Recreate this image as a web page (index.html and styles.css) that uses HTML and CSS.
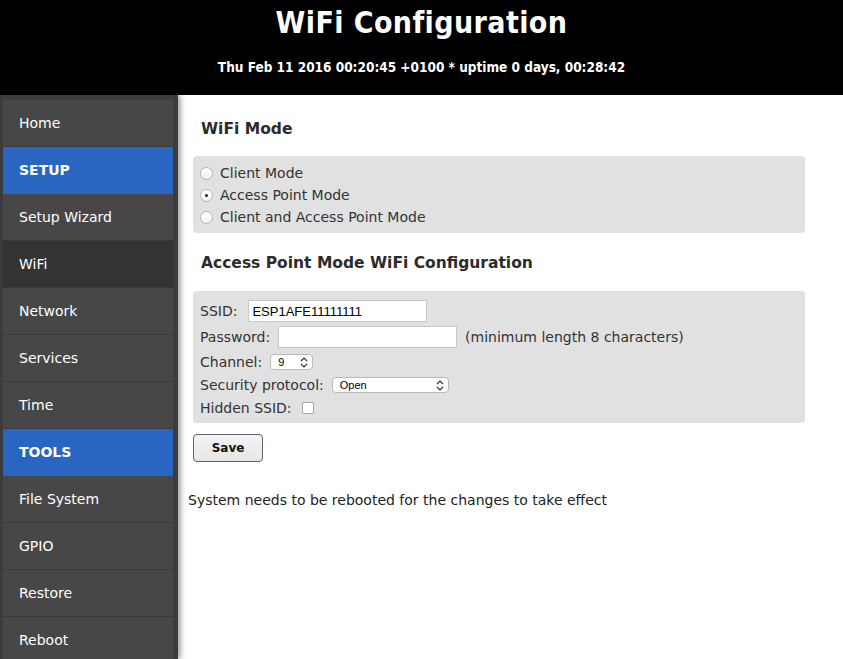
FILE: index.html
```html
<!DOCTYPE html>
<html>
<head>
<meta charset="utf-8">
<title>WiFi Configuration</title>
<link rel="stylesheet" href="styles.css">
</head>
<body>
<header class="top">
  <h1 class="title">WiFi Configuration</h1>
  <div class="subtitle">Thu Feb 11 2016 00:20:45 +0100 * uptime 0 days, 00:28:42</div>
</header>
<div class="layout">
  <nav class="sidebar">
    <a class="nav-item">Home</a>
    <a class="nav-item section">SETUP</a>
    <a class="nav-item">Setup Wizard</a>
    <a class="nav-item current">WiFi</a>
    <a class="nav-item">Network</a>
    <a class="nav-item">Services</a>
    <a class="nav-item">Time</a>
    <a class="nav-item section">TOOLS</a>
    <a class="nav-item">File System</a>
    <a class="nav-item">GPIO</a>
    <a class="nav-item">Restore</a>
    <a class="nav-item">Reboot</a>
  </nav>
  <main class="content">
    <h2 class="heading">WiFi Mode</h2>
    <div class="box box-mode">
      <label class="radio-row"><input type="radio" name="mode" class="radio"><span>Client Mode</span></label>
      <label class="radio-row"><input type="radio" name="mode" class="radio" checked><span>Access Point Mode</span></label>
      <label class="radio-row"><input type="radio" name="mode" class="radio"><span>Client and Access Point Mode</span></label>
    </div>
    <h2 class="heading heading-second">Access Point Mode WiFi Configuration</h2>
    <div class="box box-config">
      <div class="row row-tall">
        <span class="label label-ssid">SSID:</span>
        <input type="text" class="text-input" value="ESP1AFE11111111">
      </div>
      <div class="row row-tall">
        <span class="label">Password:</span>
        <input type="password" class="text-input">
        <span class="hint">(minimum length 8 characters)</span>
      </div>
      <div class="row">
        <span class="label">Channel:</span>
        <span class="select-wrap select-channel">
          <select class="select"><option>9</option></select>
          <svg class="chev" width="8" height="11" viewBox="0 0 8 11"><path d="M1 4 L4 1 L7 4 M1 7 L4 10 L7 7" fill="none" stroke="#333" stroke-width="1.2"/></svg>
        </span>
      </div>
      <div class="row">
        <span class="label">Security protocol:</span>
        <span class="select-wrap select-security">
          <select class="select"><option>Open</option></select>
          <svg class="chev" width="8" height="11" viewBox="0 0 8 11"><path d="M1 4 L4 1 L7 4 M1 7 L4 10 L7 7" fill="none" stroke="#333" stroke-width="1.2"/></svg>
        </span>
      </div>
      <div class="row">
        <span class="label label-hidden">Hidden SSID:</span>
        <input type="checkbox" class="checkbox">
      </div>
    </div>
    <button class="save">Save</button>
    <p class="note">System needs to be rebooted for the changes to take effect</p>
  </main>
</div>
</body>
</html>
```
FILE: styles.css
```css
html, body {
  margin: 0;
  padding: 0;
  background: #fff;
}
body {
  font-family: "DejaVu Sans", Verdana, sans-serif;
  color: #333;
  font-size: 13px;
  height: 659px;
  overflow: hidden;
}
.top {
  background: #000;
  color: #fff;
  height: 95px;
  text-align: center;
  box-sizing: border-box;
  padding-top: 5px;
}
.title {
  margin: 0;
  font-family: "DejaVu Sans Condensed", "DejaVu Sans", sans-serif;
  font-stretch: condensed;
  font-weight: bold;
  font-size: 30px;
  line-height: 36px;
  letter-spacing: 0.4px;
}
.subtitle {
  margin-top: 17px;
  font-family: "DejaVu Sans Condensed", "DejaVu Sans", sans-serif;
  font-stretch: condensed;
  font-weight: bold;
  font-size: 13.5px;
  line-height: 18px;
}
.layout {
  display: flex;
  height: 564px;
}
.sidebar {
  width: 170px;
  flex: none;
  background: #3c3c3c;
  padding: 5px 5px 0 3px;
  display: flex;
  flex-direction: column;
  box-shadow: 2px 0 6px rgba(0, 0, 0, 0.45);
  position: relative;
  z-index: 1;
}
.nav-item {
  display: flex;
  align-items: center;
  height: 46px;
  flex: none;
  border-bottom: 1px solid #3a3a3a;
  background: #474747;
  color: #fff;
  padding-left: 16px;
  font-size: 14px;
  text-decoration: none;
}
.nav-item.section {
  background: #2966c1;
  font-weight: bold;
  border-bottom-color: #2966c1;
}
.nav-item.current {
  background: #333333;
}
.content {
  flex: 1;
  padding: 4px 38px 0 10px;
}
.heading {
  margin: 21px 0 18px 13px;
  font-size: 15.5px;
  line-height: 18px;
  font-weight: bold;
  color: #2b2b2b;
}
.heading-second {
  margin-bottom: 19px;
}
.box {
  margin-left: 5px;
  background: #e1e1e1;
  border-radius: 4px;
  box-sizing: border-box;
}
.box-mode {
  padding: 6px 7px 5px 7px;
}
.radio-row {
  display: flex;
  align-items: center;
  height: 22px;
  font-size: 14px;
  color: #333;
}
.radio {
  appearance: none;
  -webkit-appearance: none;
  width: 13px;
  height: 13px;
  margin: 0 7px 0 0;
  border-radius: 50%;
  border: 1px solid #b5b5b5;
  background: linear-gradient(#fff, #f1f1f1);
  box-sizing: border-box;
  position: relative;
}
.radio:checked::after {
  content: "";
  position: absolute;
  left: 4px;
  top: 4px;
  width: 3px;
  height: 3px;
  border-radius: 50%;
  background: #222;
}
.box-config {
  padding: 7px 7px 4px 7px;
}
.row {
  display: flex;
  align-items: center;
  height: 23px;
  font-size: 14px;
  color: #333;
}
.row-tall {
  height: 26px;
}
.label {
  margin-right: 8px;
}
.label-ssid {
  margin-right: 11px;
}
.label-hidden {
  margin-right: 10px;
}
.text-input {
  width: 179px;
  height: 22px;
  box-sizing: border-box;
  border: 1px solid #c8c8c8;
  background: #fff;
  padding: 0 3px;
  font-family: "Liberation Sans", Arial, sans-serif;
  font-size: 13px;
  color: #000;
  outline: none;
}
.hint {
  margin-left: 8px;
}
.select-wrap {
  position: relative;
  display: inline-block;
  height: 16px;
}
.select {
  appearance: none;
  -webkit-appearance: none;
  height: 16px;
  box-sizing: border-box;
  border: 1px solid #b9b9b9;
  border-radius: 4px;
  background: #fff;
  font-family: "Liberation Sans", Arial, sans-serif;
  font-size: 11px;
  color: #000;
  padding: 0 0 0 7px;
  margin: 0;
  outline: none;
  display: block;
}
.select-channel .select {
  width: 43px;
}
.select-security .select {
  width: 117px;
}
.chev {
  position: absolute;
  right: 5px;
  top: 3px;
  pointer-events: none;
}
.checkbox {
  appearance: none;
  -webkit-appearance: none;
  width: 12px;
  height: 12px;
  margin: 0;
  border: 1px solid #a9a9a9;
  border-radius: 2px;
  background: #fff;
  box-sizing: border-box;
}
.save {
  margin: 11px 0 0 5px;
  width: 70px;
  height: 28px;
  border: 1px solid #5a6576;
  border-radius: 4px;
  background: linear-gradient(#f4f4f4, #e6e6e6);
  font-family: "DejaVu Sans", Verdana, sans-serif;
  font-weight: bold;
  font-size: 12px;
  color: #111;
  padding: 0;
}
.note {
  margin: 29px 0 0 0;
  font-size: 14px;
  line-height: 18px;
  color: #222;
}
```
